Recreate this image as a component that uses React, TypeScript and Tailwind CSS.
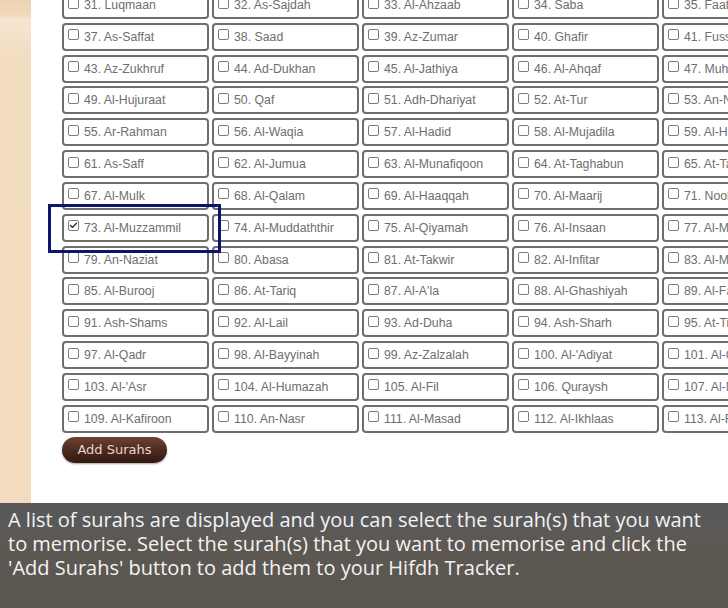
import { Check } from "lucide-react";

const surahs: string[] = [
  "Luqmaan", "As-Sajdah", "Al-Ahzaab", "Saba", "Faatir", "Yaseen",
  "As-Saffat", "Saad", "Az-Zumar", "Ghafir", "Fussilat", "Ash-Shura",
  "Az-Zukhruf", "Ad-Dukhan", "Al-Jathiya", "Al-Ahqaf", "Muhammad", "Al-Fath",
  "Al-Hujuraat", "Qaf", "Adh-Dhariyat", "At-Tur", "An-Najm", "Al-Qamar",
  "Ar-Rahman", "Al-Waqia", "Al-Hadid", "Al-Mujadila", "Al-Hashr", "Al-Mumtahanah",
  "As-Saff", "Al-Jumua", "Al-Munafiqoon", "At-Taghabun", "At-Talaq", "At-Tahrim",
  "Al-Mulk", "Al-Qalam", "Al-Haaqqah", "Al-Maarij", "Nooh", "Al-Jinn",
  "Al-Muzzammil", "Al-Muddaththir", "Al-Qiyamah", "Al-Insaan", "Al-Mursalat", "An-Naba",
  "An-Naziat", "Abasa", "At-Takwir", "Al-Infitar", "Al-Mutaffifin", "Al-Inshiqaq",
  "Al-Burooj", "At-Tariq", "Al-A'la", "Al-Ghashiyah", "Al-Fajr", "Al-Balad",
  "Ash-Shams", "Al-Lail", "Ad-Duha", "Ash-Sharh", "At-Tin", "Al-Alaq",
  "Al-Qadr", "Al-Bayyinah", "Az-Zalzalah", "Al-'Adiyat", "Al-Qari'ah", "At-Takathur",
  "Al-'Asr", "Al-Humazah", "Al-Fil", "Quraysh", "Al-Ma'un", "Al-Kawthar",
  "Al-Kafiroon", "An-Nasr", "Al-Masad", "Al-Ikhlaas", "Al-Falaq", "An-Nas",
];

function SurahCell({ num, name }: { num: number; name: string }) {
  const checked = num === 73;
  return (
    <label className="flex h-[28px] w-[147px] shrink-0 items-center rounded-[4px] border-2 border-[#6e6e6e] bg-white pl-[4px]">
      <span className="mb-[4px] mr-[5px] flex h-[11px] w-[11px] shrink-0 items-center justify-center rounded-[2px] border border-[#7c7c7c] bg-white">
        {checked && <Check size={11} strokeWidth={3.5} className="text-[#222]" />}
      </span>
      <span className="whitespace-nowrap text-[12.3px] leading-[14px] text-[#6e6e6e] [font-family:'Liberation_Sans',Arial,sans-serif]">
        {num}. {name}
      </span>
    </label>
  );
}

export default function App() {
  return (
    <div className="flex h-[608px] w-[728px] flex-col overflow-hidden bg-white">
      <div className="flex h-[503px] shrink-0">
        <div className="w-[31px] shrink-0 bg-[linear-gradient(to_bottom,#eed3b2_0px,#f0d8ba_14px,#f6e5d1_20px,#f2dcc0_60px,#f2dbbf_100%)]" />
        <div className="relative flex-1 overflow-hidden">
          <div className="ml-[31px] mt-[-9px] grid w-[900px] grid-cols-[repeat(6,147px)] gap-x-[3px] gap-y-[3.83px]">
            {surahs.map((name, i) => (
              <SurahCell key={i} num={31 + i} name={name} />
            ))}
          </div>
          <button className="ml-[31px] mt-[4px] flex h-[26px] w-[105px] items-center justify-center rounded-full bg-[linear-gradient(to_bottom,#6e4233,#4a281d_55%,#351a12)] text-[13px] text-[#e6d6cf] shadow-[0_1px_2px_rgba(0,0,0,0.35)] [font-family:'DejaVu_Sans',Verdana,sans-serif]">
            Add Surahs
          </button>
          <div className="pointer-events-none absolute left-[17px] top-[204px] h-[49px] w-[173px] border-[3px] border-[#0b1570]" />
        </div>
      </div>
      <div className="flex-1 whitespace-nowrap bg-[linear-gradient(to_bottom,#58585a_0px,#59595a_22px,#5d5852_34px,#5b5650_100%)] pl-[8px] pt-[5px] text-[20px] leading-[24px] text-[#f3f3f3] [font-family:'Open_Sans',Lato,sans-serif]">
        A list of surahs are displayed and you can select the surah(s) that you want
        <br />
        to memorise. Select the surah(s) that you want to memorise and click the
        <br />
        'Add Surahs' button to add them to your Hifdh Tracker.
      </div>
    </div>
  );
}
